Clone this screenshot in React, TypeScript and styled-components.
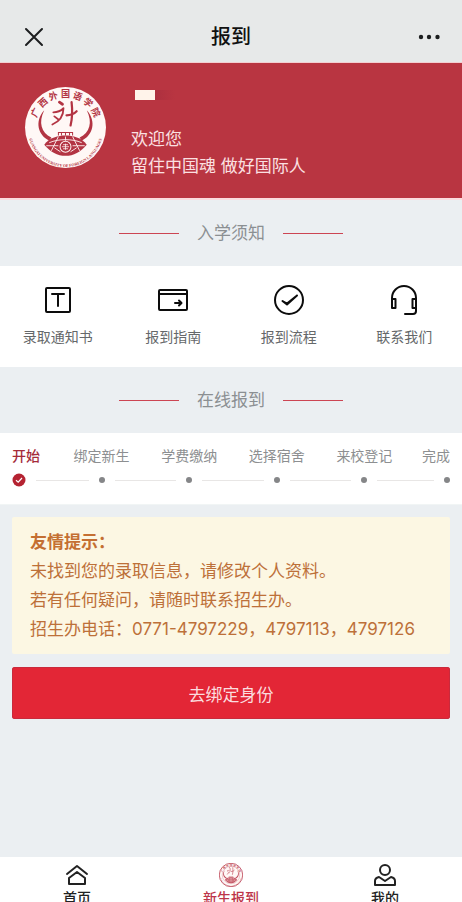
import React from "react";
import styled, { createGlobalStyle } from "styled-components";

const GlobalStyle = createGlobalStyle`
  *, *::before, *::after { box-sizing: border-box; }
  body {
    margin: 0;
    background: #ebeff2;
    font-family: Inter, "Noto Sans CJK SC", sans-serif;
    -webkit-font-smoothing: antialiased;
  }
  button { font: inherit; border: 0; cursor: pointer; }
  a { color: inherit; text-decoration: none; }
  h1, h2, p, ol { margin: 0; padding: 0; font-weight: 400; }
  ol { list-style: none; }
  svg { display: block; }
`;

const Page = styled.div`
  display: flex;
  flex-direction: column;
  height: 100vh;
  overflow: hidden;
`;

const Content = styled.main`
  flex: 1;
  min-height: 0;
  overflow: hidden;
`;

const TitleBar = styled.header`
  display: grid;
  grid-template-columns: 1fr auto 1fr;
  align-items: center;
  padding: 12px 20px 0;
  height: 63px;
  background: #e7e9e9;
  border-bottom: 1px solid #f3cfd1;
`;

const PageTitle = styled.h1`
  font-size: 20px;
  line-height: 28px;
  font-weight: 500;
  color: #111;
`;

const BarButton = styled.button<{ $end?: boolean }>`
  justify-self: ${(p) => (p.$end ? "end" : "start")};
  padding: 0;
  background: none;
  color: #1c1e1f;
`;

const Hero = styled.section`
  display: flex;
  gap: 24px;
  padding: 23px 24px 0;
  height: 137px;
  background: #b93541;
  border-bottom: 2px solid #fbdcde;
  color: #fbe0e1;
`;

const Greeting = styled.div`
  display: flex;
  flex-direction: column;
  font-size: 17px;
  line-height: 27px;
`;

const MaskedName = styled.div`
  display: flex;
  width: 40px;
  height: 10px;
  margin: 4px 4px 26px;
  background: linear-gradient(90deg, #fff3ea 50%, #ad303f 50%, #b93541);
`;

const SectionTitle = styled.h2`
  display: flex;
  align-items: center;
  justify-content: center;
  gap: 18px;
  height: 66px;
  font-size: 17px;
  line-height: 24px;
  color: #8b8f92;
`;

const Rule = styled.span`
  width: 60px;
  height: 1px;
  background: #cc4553;
`;

const Shortcuts = styled.nav`
  display: grid;
  grid-template-columns: repeat(4, 1fr);
  height: 101px;
  padding-top: 18px;
  background: #fff;
`;

const Shortcut = styled.a`
  display: flex;
  flex-direction: column;
  align-items: center;
  gap: 10px;
  font-size: 14px;
  line-height: 22px;
  color: #65686a;

  svg { color: #0c0c0c; }
`;

const Steps = styled.ol`
  display: grid;
  grid-template-columns: 46fr repeat(4, 88fr) 42fr;
  height: 72px;
  padding: 12px 12px 0;
  background: #fff;
  border-bottom: 1px solid #f1f5f5;
`;

type Edge = "first" | "middle" | "last";

const Step = styled.li<{ $edge: Edge; $active?: boolean }>`
  display: flex;
  flex-direction: column;
  align-items: ${(p) =>
    p.$edge === "first" ? "flex-start" : p.$edge === "last" ? "flex-end" : "center"};
  font-size: 14px;
  line-height: 22px;
  white-space: nowrap;
  color: ${(p) => (p.$active ? "#a52b3a" : "#8d8f91")};
  font-weight: ${(p) => (p.$active ? 500 : 400)};
`;

const Track = styled.div`
  display: flex;
  align-items: center;
  align-self: stretch;
  gap: 10px;
  height: 14px;
  margin-top: 6px;
`;

const Segment = styled.span`
  flex: 1;
  height: 1px;
  background: #e8e6e5;
`;

const Dot = styled.span`
  width: 6px;
  height: 6px;
  border-radius: 50%;
  background: #858688;
`;

const Actions = styled.section`
  display: flex;
  flex-direction: column;
  gap: 13px;
  padding: 12px;
`;

const Notice = styled.div`
  padding: 11px 18px 10px;
  background: #fcf7e3;
  border-radius: 2px;
  font-size: 17px;
  line-height: 29px;
  color: #bd7039;
`;

const NoticeTitle = styled.p`
  font-weight: 700;
  color: #c46f32;
`;

const BindButton = styled.button`
  height: 52px;
  border-radius: 3px;
  background: #e32636;
  box-shadow: inset 0 0 0 1px #c92a3c;
  font-size: 17px;
  color: #fbdcdf;
`;

const TabBar = styled.nav`
  display: grid;
  grid-template-columns: repeat(3, 1fr);
  flex: none;
  height: 45px;
  padding-top: 6px;
  overflow: hidden;
  background: #fff;
`;

const Tab = styled.a<{ $active?: boolean }>`
  display: flex;
  flex-direction: column;
  align-items: center;
  font-size: 14px;
  line-height: 22px;
  font-weight: 500;
  color: ${(p) => (p.$active ? "#bd3549" : "#222")};
`;

function Seal({ size, color, id, bare }: { size: number; color: string; id: string; bare?: boolean }) {
  return (
    <svg width={size} height={size} viewBox="0 0 82 82" fill="none" role="img" aria-label="校徽">
      <defs>
        <path id={`${id}-top`} d="M11 41 A30 30 0 0 1 71 41" />
        <path id={`${id}-bottom`} d="M4 43 A37 37 0 0 0 78 43" />
      </defs>
      <circle cx="41" cy="41" r="40" fill="#fff8f6" stroke={color} strokeWidth={bare ? 3 : 0} />
      {bare && <circle cx="41" cy="41" r="30" stroke={color} strokeWidth="1.5" opacity=".6" />}
      <text fill={color} fontSize="9" fontWeight="600" fontFamily="Noto Sans CJK SC, sans-serif">
        <textPath href={`#${id}-top`} startOffset="50%" textAnchor="middle">
          广 西 外 国 语 学 院
        </textPath>
      </text>
      <text fill={color} fontSize="4" fontWeight="700" fontFamily="Liberation Serif, serif">
        <textPath href={`#${id}-bottom`} startOffset="50%" textAnchor="middle">
          GUANGXI UNIVERSITY OF FOREIGN LANGUAGES
        </textPath>
      </text>
      <g stroke={color} strokeLinecap="round" strokeLinejoin="round">
        <path d="M35 16 L38 18" strokeWidth="2.8" />
        <path d="M29 26 C34 26 37 24 39 22 C39 29 35 35 28 38 M30 30 L34 33" strokeWidth="1.8" />
        <path d="M47 16 C48 24 48 31 46 39 M42 29 C47 29 50 27 52 25" strokeWidth="2.2" />
      </g>
      <g fill={color}>
        <path d="M20 24 C10 35 14 49 25 54 L27 51 C17 46 14 36 20 24Z" />
        <path d="M62 24 C72 35 68 49 57 54 L55 51 C65 46 68 36 62 24Z" />
        <path d="M20 58 C25 51 34 49 41 49 C48 49 57 51 62 58 C56 65 49 69 41 69 C33 69 26 65 20 58Z" />
      </g>
      <path d="M34 49 V46 H48 V49 M37 46 V49 M41 46 V49 M45 46 V49" stroke={color} strokeWidth="1" />
      <path
        d="M25 56 C34 52 48 52 57 56 M22 59 H34 M48 59 H60 M34 50 L27 64 M48 50 L55 64 M41 50 V54 M30 61 L36 65 M52 61 L46 65"
        stroke="#fff3f1"
        strokeWidth=".9"
      />
      <circle cx="41" cy="60" r="5.4" fill={color} stroke="#fff3f1" />
      <path d="M37.500 60 H44.500 M41 57 V63 M38.500 58 H43.500 M38.500 62 H43.500" stroke="#fff3f1" strokeWidth=".8" />
    </svg>
  );
}

function Icon({ size = 32, width = 2, children }: { size?: number; width?: number; children: React.ReactNode }) {
  return (
    <svg
      width={size}
      height={size}
      viewBox={`0 0 ${size} ${size}`}
      fill="none"
      stroke="currentColor"
      strokeWidth={width}
      strokeLinecap="round"
      strokeLinejoin="round"
      aria-hidden="true"
    >
      {children}
    </svg>
  );
}

function Heading({ children }: { children: React.ReactNode }) {
  return (
    <SectionTitle>
      <Rule />
      {children}
      <Rule />
    </SectionTitle>
  );
}

const shortcuts = [
  {
    label: "录取通知书",
    art: (
      <>
        <rect x="4" y="4" width="24" height="24" rx="1" />
        <path d="M10 10 H22 M16 10 V22" />
      </>
    ),
  },
  {
    label: "报到指南",
    art: (
      <>
        <rect x="2" y="6" width="28" height="20" rx="1" />
        <path d="M2 10 H30 M18 19 H24 M22 16.500 L24.500 19 L22 21.500" />
      </>
    ),
  },
  {
    label: "报到流程",
    art: (
      <>
        <circle cx="16" cy="16" r="14" />
        <path d="M9.500 17 L14 20.500 L24 11.500 L14 19.500Z" />
      </>
    ),
  },
  {
    label: "联系我们",
    art: (
      <>
        <path d="M4 15 V14 A12 12 0 0 1 28 14 V27 Q28 30 25 30 H17" />
        <rect x="4" y="15" width="3.500" height="9" />
        <rect x="24.500" y="15" width="3.500" height="9" />
      </>
    ),
  },
];

const steps = ["开始", "绑定新生", "学费缴纳", "选择宿舍", "来校登记", "完成"];

export default function App() {
  return (
    <>
      <GlobalStyle />
      <Page>
        <TitleBar>
          <BarButton aria-label="关闭">
            <Icon size={28}>
              <path d="M6 6 L22 22 M22 6 L6 22" />
            </Icon>
          </BarButton>
          <PageTitle>报到</PageTitle>
          <BarButton $end aria-label="更多">
            <svg width="28" height="28" viewBox="0 0 28 28" fill="currentColor" aria-hidden="true">
              <circle cx="7" cy="14" r="2.200" />
              <circle cx="15" cy="14" r="2.200" />
              <circle cx="23.500" cy="14" r="2.200" />
            </svg>
          </BarButton>
        </TitleBar>
        <Content>
          <Hero>
            <Seal size={83} color="#b33443" id="hero" />
            <Greeting>
              <MaskedName />
              <p>欢迎您</p>
              <p>留住中国魂 做好国际人</p>
            </Greeting>
          </Hero>
          <Heading>入学须知</Heading>
          <Shortcuts>
            {shortcuts.map((item) => (
              <Shortcut href="#" key={item.label}>
                <Icon>{item.art}</Icon>
                {item.label}
              </Shortcut>
            ))}
          </Shortcuts>
          <Heading>在线报到</Heading>
          <Steps>
            {steps.map((label, i) => {
              const edge: Edge = i === 0 ? "first" : i === steps.length - 1 ? "last" : "middle";
              return (
                <Step key={label} $edge={edge} $active={i === 0}>
                  {label}
                  <Track>
                    {edge !== "first" && <Segment />}
                    {edge === "first" ? (
                      <svg width="14" height="14" viewBox="0 0 14 14" fill="none" aria-hidden="true">
                        <circle cx="7" cy="7" r="6.500" fill="#b52332" />
                        <path d="M4 7.200 L6.200 9.200 L10 5" stroke="#fff" strokeWidth="1.200" />
                      </svg>
                    ) : (
                      <Dot />
                    )}
                    {edge !== "last" && <Segment />}
                  </Track>
                </Step>
              );
            })}
          </Steps>
          <Actions>
            <Notice>
              <NoticeTitle>友情提示：</NoticeTitle>
              <p>未找到您的录取信息，请修改个人资料。</p>
              <p>若有任何疑问，请随时联系招生办。</p>
              <p>招生办电话：0771-4797229，4797113，4797126</p>
            </Notice>
            <BindButton>去绑定身份</BindButton>
          </Actions>
        </Content>
        <TabBar>
          <Tab href="#">
            <Icon size={24}>
              <path d="M2 11 L12 3 L22 11" />
              <path d="M4 21 V15 L12 9 L20 15 V21Z" />
            </Icon>
            首页
          </Tab>
          <Tab href="#" $active>
            <Seal size={24} color="#c04c5b" id="tab" bare />
            新生报到
          </Tab>
          <Tab href="#">
            <Icon size={24}>
              <circle cx="12" cy="7" r="5" />
              <path d="M2 22 V18 Q2 15 6 14 L12 18 L18 14 Q22 15 22 18 V22Z" />
            </Icon>
            我的
          </Tab>
        </TabBar>
      </Page>
    </>
  );
}
